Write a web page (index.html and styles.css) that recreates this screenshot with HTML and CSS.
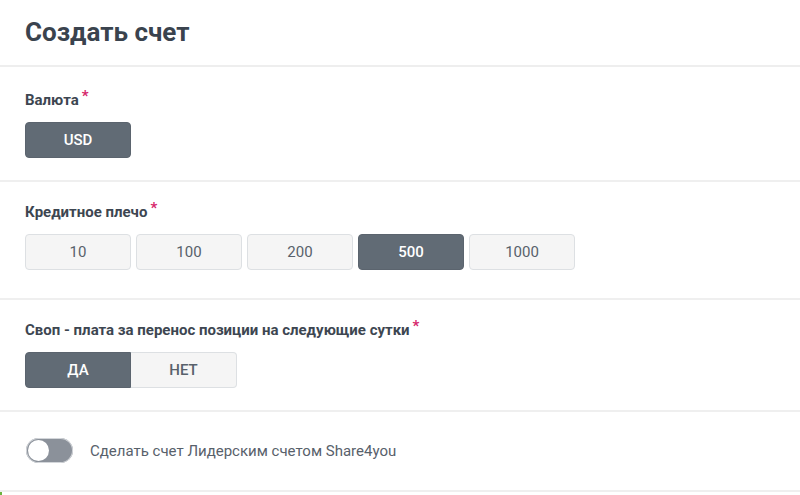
FILE: index.html
```html
<!DOCTYPE html>
<html lang="ru">
<head>
  <meta charset="UTF-8" />
  <title>Создать счет</title>
  <link rel="stylesheet" href="styles.css">
</head>
<body>
  <div class="panel">
    <div class="panel-head">
      <h1>Создать счет</h1>
    </div>

    <div class="section section-first">
      <div class="label">Валюта<span class="req">*</span></div>
      <div class="options">
        <button class="opt active">USD</button>
      </div>
    </div>

    <div class="section section-wide">
      <div class="label">Кредитное плечо<span class="req">*</span></div>
      <div class="options">
        <button class="opt">10</button>
        <button class="opt">100</button>
        <button class="opt">200</button>
        <button class="opt active">500</button>
        <button class="opt">1000</button>
      </div>
    </div>

    <div class="section">
      <div class="label">Своп - плата за перенос позиции на следующие сутки<span class="req">*</span></div>
      <div class="segmented">
        <button class="seg active">ДА</button>
        <button class="seg">НЕТ</button>
      </div>
    </div>

    <div class="section section-toggle">
      <label class="switch">
        <span class="track"><span class="knob"></span></span>
        <span class="switch-text">Сделать счет Лидерским счетом Share4you</span>
      </label>
    </div>
  </div>
  <div class="next-mark"></div>
</body>
</html>
```

FILE: styles.css
```css
body {
  font-family: Roboto, 'Liberation Sans', sans-serif;
  background-color: #fff;
  color: #3d4651;
  margin: 0;
}

.panel-head {
  height: 65px;
  padding: 0 25px;
  display: flex;
  align-items: center;
  border-bottom: 2px solid #eeeeee;
}

h1 {
  margin: 0;
  font-size: 26px;
  font-weight: 700;
  color: #3a434e;
  padding-bottom: 2px;
}

.section {
  padding: 20px 25px 22px;
  border-bottom: 2px solid #efefef;
}

.section-first {
  padding-top: 23px;
}

.section-wide {
  padding-bottom: 28px;
}

.label {
  font-size: 15px;
  font-weight: 700;
  line-height: 20px;
  margin-bottom: 12px;
  color: #3d4651;
}

.req {
  position: relative;
  top: -4px;
  color: #d6286b;
  margin-left: 3px;
  font-size: 15px;
}

.options {
  display: flex;
  gap: 5px;
}

button {
  font-family: inherit;
  cursor: pointer;
}

.opt,
.seg {
  width: 106px;
  height: 36px;
  font-size: 15px;
  color: #58616b;
  background-color: #f5f5f5;
  border: 1px solid #dde0e3;
  border-radius: 4px;
  padding: 0;
}

.opt.active,
.seg.active {
  background-color: #616b75;
  border-color: #5b646e;
  color: #fff;
  font-weight: 500;
}

.segmented {
  display: flex;
}

.seg {
  border-radius: 0;
}

.seg:first-child {
  border-radius: 4px 0 0 4px;
}

.seg:last-child {
  border-radius: 0 4px 4px 0;
  border-left: none;
  font-weight: 500;
}

.section-toggle {
  padding: 26px 26px 27px;
}

.switch {
  display: flex;
  align-items: center;
  gap: 17px;
  cursor: pointer;
}

.track {
  position: relative;
  width: 47px;
  height: 25px;
  border-radius: 13px;
  background-color: #8b919a;
  box-shadow: inset 0 0 0 1px #d3d6da;
}

.knob {
  position: absolute;
  top: 2px;
  left: 2px;
  width: 21px;
  height: 21px;
  border-radius: 50%;
  background-color: #fff;
}

.switch-text {
  font-size: 15px;
  color: #58616b;
}

.next-mark {
  width: 2px;
  height: 3px;
  background-color: #6cb33f;
}
```
